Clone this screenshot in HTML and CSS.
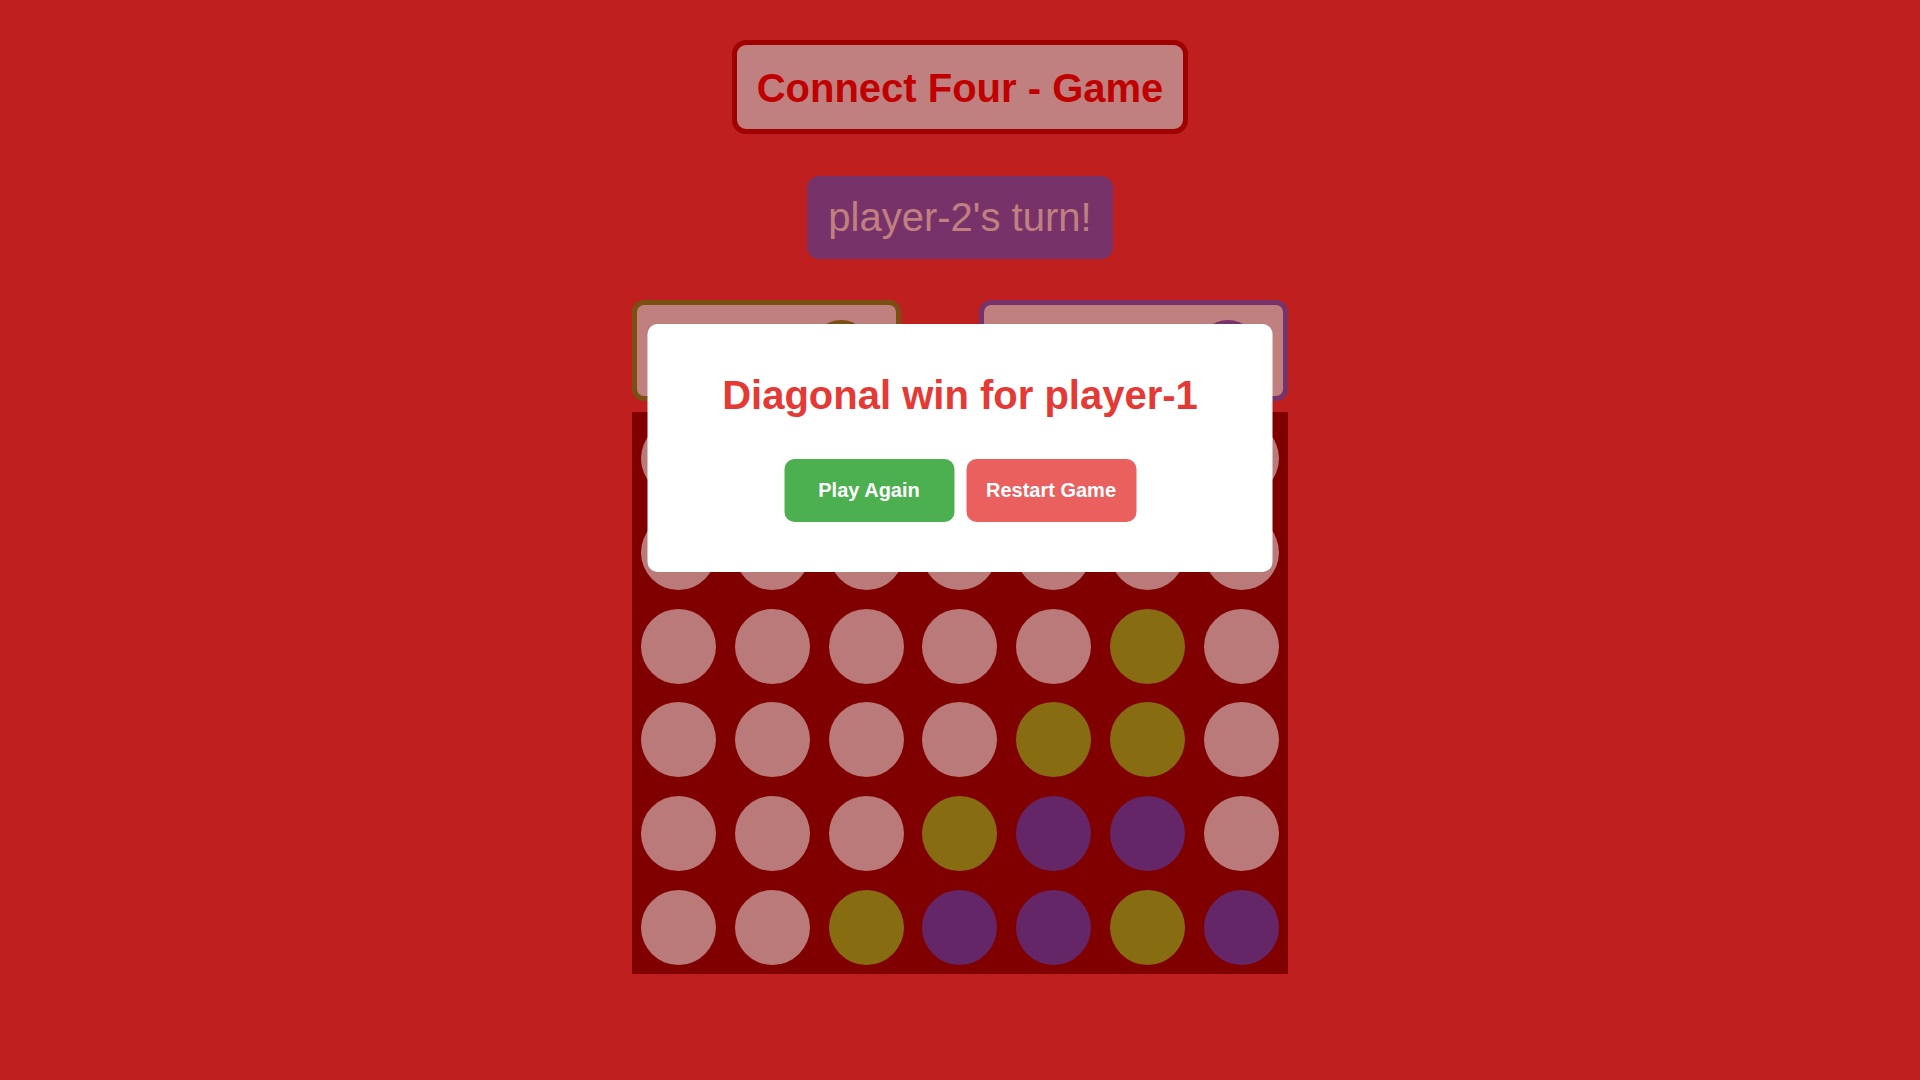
FILE: index.html
```html
<!DOCTYPE html>
<html lang="en">
<head>
<meta charset="utf-8">
<title>Connect Four - Game</title>
<link rel="stylesheet" href="styles.css">
</head>
<body>
<div class="app">
  <h1 class="title">Connect Four - Game</h1>
  <div class="turn">player-2's turn!</div>
  <div class="game">
    <div class="players">
      <div class="player-card player-one">
        <span class="player-name">player-1</span>
        <span class="player-disc disc-one"></span>
      </div>
      <div class="player-card player-two">
        <span class="player-name">player-2</span>
        <span class="player-disc disc-two"></span>
      </div>
    </div>
    <div class="board">
      <div class="cell"><span class="slot"></span></div>
      <div class="cell"><span class="slot"></span></div>
      <div class="cell"><span class="slot"></span></div>
      <div class="cell"><span class="slot"></span></div>
      <div class="cell"><span class="slot"></span></div>
      <div class="cell"><span class="slot"></span></div>
      <div class="cell"><span class="slot"></span></div>

      <div class="cell"><span class="slot"></span></div>
      <div class="cell"><span class="slot"></span></div>
      <div class="cell"><span class="slot"></span></div>
      <div class="cell"><span class="slot"></span></div>
      <div class="cell"><span class="slot"></span></div>
      <div class="cell"><span class="slot"></span></div>
      <div class="cell"><span class="slot"></span></div>

      <div class="cell"><span class="slot"></span></div>
      <div class="cell"><span class="slot"></span></div>
      <div class="cell"><span class="slot"></span></div>
      <div class="cell"><span class="slot"></span></div>
      <div class="cell"><span class="slot"></span></div>
      <div class="cell"><span class="slot p1"></span></div>
      <div class="cell"><span class="slot"></span></div>

      <div class="cell"><span class="slot"></span></div>
      <div class="cell"><span class="slot"></span></div>
      <div class="cell"><span class="slot"></span></div>
      <div class="cell"><span class="slot"></span></div>
      <div class="cell"><span class="slot p1"></span></div>
      <div class="cell"><span class="slot p1"></span></div>
      <div class="cell"><span class="slot"></span></div>

      <div class="cell"><span class="slot"></span></div>
      <div class="cell"><span class="slot"></span></div>
      <div class="cell"><span class="slot"></span></div>
      <div class="cell"><span class="slot p1"></span></div>
      <div class="cell"><span class="slot p2"></span></div>
      <div class="cell"><span class="slot p2"></span></div>
      <div class="cell"><span class="slot"></span></div>

      <div class="cell"><span class="slot"></span></div>
      <div class="cell"><span class="slot"></span></div>
      <div class="cell"><span class="slot p1"></span></div>
      <div class="cell"><span class="slot p2"></span></div>
      <div class="cell"><span class="slot p2"></span></div>
      <div class="cell"><span class="slot p1"></span></div>
      <div class="cell"><span class="slot p2"></span></div>
    </div>
    <div class="modal">
      <h2 class="modal-title">Diagonal win for player-1</h2>
      <div class="modal-actions">
        <button class="btn btn-play">Play Again</button>
        <button class="btn btn-restart">Restart Game</button>
      </div>
    </div>
  </div>
</div>
</body>
</html>
```
FILE: styles.css
```css
* {
  box-sizing: border-box;
}

html, body {
  margin: 0;
  padding: 0;
}

body {
  background: #bf1f1f;
  font-family: "Liberation Sans", Arial, sans-serif;
  min-height: 1080px;
}

.app {
  display: flex;
  flex-direction: column;
  align-items: center;
  padding-top: 40px;
}

.title {
  margin: 0 0 42px;
  padding: 20px 20px 18px;
  font-size: 40px;
  line-height: 46px;
  font-weight: bold;
  color: #c00000;
  background: #c08080;
  border: 5px solid #a10000;
  border-radius: 14px;
}

.turn {
  margin: 0 0 41px;
  padding: 18px 21.5px 19px;
  font-size: 40px;
  line-height: 46px;
  color: #c08080;
  background: #773369;
  border-radius: 12px;
}

.game {
  position: relative;
  width: 656px;
  display: flex;
  flex-direction: column;
}

.players {
  display: flex;
  justify-content: space-between;
  margin-bottom: 11px;
}

.player-card {
  height: 101px;
  display: flex;
  align-items: flex-start;
  justify-content: space-between;
  padding: 15px 25px 15px 25px;
  background: #c08080;
  border: 5px solid #7a5012;
  border-radius: 12px;
}

.player-one {
  width: 269px;
  border-color: #7a5012;
}

.player-two {
  width: 309px;
  border-color: #773369;
}

.player-name {
  align-self: center;
  font-size: 20px;
  font-weight: bold;
  color: #c00000;
}

.player-disc {
  width: 60px;
  height: 60px;
  border-radius: 50%;
}

.disc-one {
  background: #7a5012;
}

.disc-two {
  background: #773369;
}

.board {
  width: 656px;
  height: 562px;
  background: #800000;
  display: grid;
  grid-template-columns: repeat(7, 1fr);
  grid-template-rows: repeat(6, 1fr);
}

.cell {
  display: flex;
  align-items: center;
  justify-content: center;
}

.slot {
  width: 75px;
  height: 75px;
  border-radius: 50%;
  background: #ba7a7a;
}

.slot.p1 {
  background: #886c11;
}

.slot.p2 {
  background: #652668;
}

.modal {
  position: absolute;
  top: 24px;
  left: 50%;
  transform: translateX(-50%);
  width: 625px;
  height: 248px;
  padding: 48px 20px 50px;
  background: #ffffff;
  border-radius: 10px;
  display: flex;
  flex-direction: column;
  align-items: center;
}

.modal-title {
  margin: 0 0 41px;
  font-size: 40px;
  line-height: 46px;
  font-weight: bold;
  color: #e53935;
  white-space: nowrap;
}

.modal-actions {
  display: flex;
  gap: 12px;
}

.btn {
  width: 170px;
  height: 63px;
  border: none;
  border-radius: 10px;
  font-family: "Liberation Sans", Arial, sans-serif;
  font-size: 20px;
  font-weight: bold;
  color: #ffffff;
  cursor: pointer;
}

.btn-play {
  background: #4caf50;
}

.btn-restart {
  background: #e9605e;
}
```
